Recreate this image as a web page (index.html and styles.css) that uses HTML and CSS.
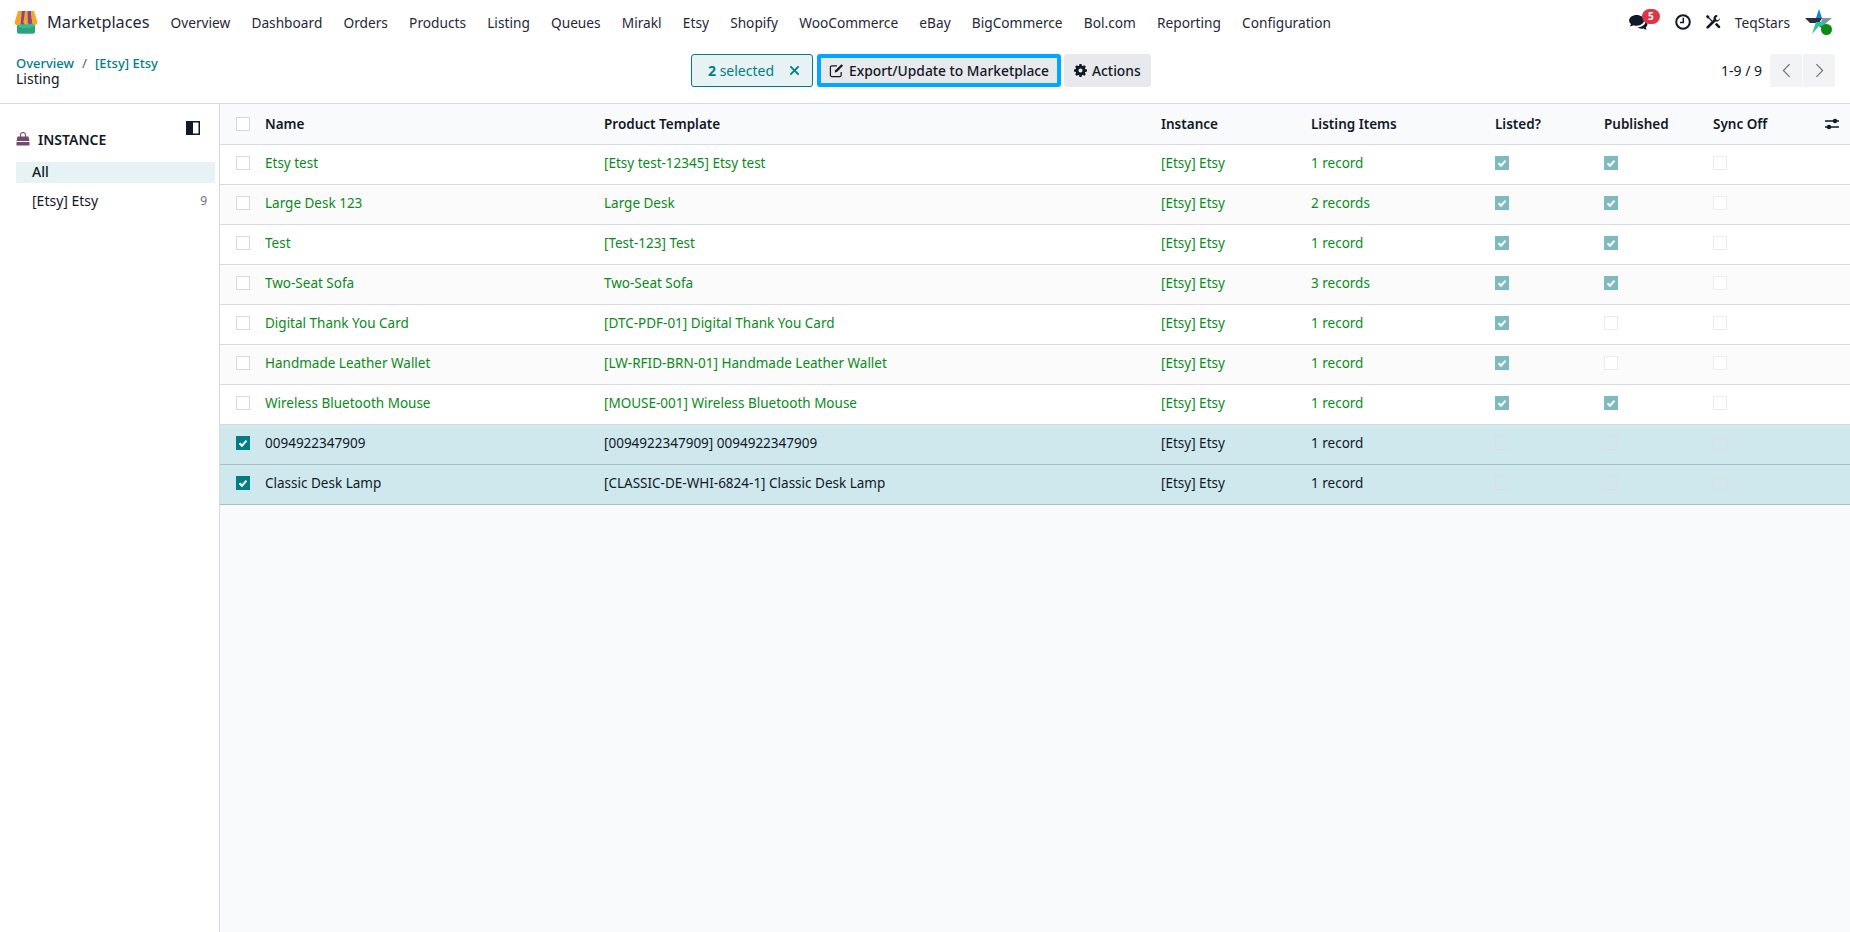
FILE: index.html
```html
<!DOCTYPE html>
<html lang="en">
<head>
  <meta charset="UTF-8" />
  <title>Marketplaces - Listing</title>
  <link rel="stylesheet" href="styles.css">
</head>
<body>
  <header class="navbar">
    <a class="brand">
      <svg class="brand-logo" viewBox="0 0 24 24" width="24" height="26">
        <path d="M3 12h18v9.500a2 2 0 0 1-2 2H5a2 2 0 0 1-2-2z" fill="#3cb892"/>
        <path d="M3 16c6 3 12 3 18 0v5.500a2 2 0 0 1-2 2H5a2 2 0 0 1-2-2z" fill="#2aa37f"/>
        <path d="M4 1h3.500L6.800 12.500a3.200 3.200 0 0 1-6.300.2z" fill="#f5a623"/>
        <path d="M7.500 1h3.600l-.2 11.500a2 2 0 0 1-4.100 0z" fill="#8e4585"/>
        <path d="M11 1h3.200l.6 11.500a2.800 2.800 0 0 1-5.400 0z" fill="#f5a623"/>
        <path d="M13.600 1h3.600l1 11.500a2.300 2.300 0 0 1-4.400 0z" fill="#8e4585"/>
        <path d="M17 1h3l3.500 11.700a2.700 2.700 0 0 1-5.300 0z" fill="#f5a623"/>
      </svg>
      <span>Marketplaces</span>
    </a>
    <nav class="menu">
      <a>Overview</a>
      <a>Dashboard</a>
      <a>Orders</a>
      <a>Products</a>
      <a>Listing</a>
      <a>Queues</a>
      <a>Mirakl</a>
      <a>Etsy</a>
      <a>Shopify</a>
      <a>WooCommerce</a>
      <a>eBay</a>
      <a>BigCommerce</a>
      <a>Bol.com</a>
      <a>Reporting</a>
      <a>Configuration</a>
    </nav>
    <div class="systray">
      <span class="tray-chat">
        <svg viewBox="0 0 20 16" width="19" height="15">
          <path d="M8 0C3.600 0 0 2.600 0 5.800c0 1.500.8 2.800 2 3.800-.3 1.100-1 2-1.500 2.500 1.500 0 3-.6 4-1.300 1 .4 2.200.6 3.500.6 4.400 0 8-2.500 8-5.700S12.400 0 8 0z" fill="#111827"/>
          <path d="M17.500 5.500c.1.300.1.600.1.900 0 3.900-4 6.600-8.600 6.700 1.100 1 2.700 1.500 4.400 1.500.7 0 1.400-.1 2-.3.8.6 2.100 1.200 3.600 1.200-.5-.5-1.100-1.300-1.300-2.200 1.100-.9 1.800-2.100 1.800-3.400 0-1.700-.8-3.200-2-4.400z" fill="#111827"/>
        </svg>
        <span class="tray-badge">5</span>
      </span>
      <svg class="tray-clock" viewBox="0 0 16 16" width="16" height="16">
        <circle cx="8" cy="8" r="6.800" fill="none" stroke="#111827" stroke-width="2"/>
        <path d="M8.300 3.800v4.700H5" fill="none" stroke="#111827" stroke-width="1.500"/>
      </svg>
      <svg class="tray-tools" viewBox="0 0 16 16" width="16" height="16">
        <path d="M2.200 1 1 2.200l1 2 1.600.4 3.200 3.200.9-.9-3.200-3.200-.4-1.600z" fill="#111827"/>
        <path d="M11.800 1a3.400 3.400 0 0 0-3.200 4.500L1.700 12.400a1.300 1.300 0 0 0 1.900 1.900l6.900-6.900A3.400 3.400 0 0 0 15 4.200l-2 2-1.800-.5-.5-1.800 2-2a3.400 3.400 0 0 0-.9-.9z" fill="#111827"/>
        <path d="m9.900 10.400 3.400 3.600a1.300 1.300 0 0 0 1.800-1.800l-3.500-3.500z" fill="#111827"/>
      </svg>
      <span class="tray-user">TeqStars</span>
      <span class="tray-avatar">
        <svg viewBox="0 0 28 28" width="28" height="28">
          <path d="M14 1l3 9h-6z" fill="#1d7fd6"/>
          <path d="M0 10h17l-3 5H5z" fill="#2b2d42"/>
          <path d="M17 10h10l-7 6-4-1z" fill="#8a8fa8"/>
          <path d="M11 14h9l2 5-8-1-7 8z" fill="#27c39a"/>
          <path d="M14 18l8 1 1 6z" fill="#1b2a49"/>
          <circle cx="21.500" cy="21.500" r="5.500" fill="#0c8a14"/>
        </svg>
      </span>
    </div>
  </header>

  <section class="control-panel">
    <div class="breadcrumbs">
      <div class="crumb-links"><a>Overview</a><span class="crumb-sep">/</span><a>[Etsy] Etsy</a></div>
      <div class="crumb-current">Listing</div>
    </div>
    <div class="actions">
      <div class="selected-box">
        <span><b>2</b> selected</span>
        <svg viewBox="0 0 12 12" width="11" height="11"><path d="M1.500 1.500l9 9M10.500 1.500l-9 9" stroke="#017e84" stroke-width="2" fill="none"/></svg>
      </div>
      <button class="btn btn-focus">
        <svg viewBox="0 0 16 16" width="15" height="15">
          <path d="M13 9.500V13a1.500 1.500 0 0 1-1.500 1.500H3A1.500 1.500 0 0 1 1.500 13V4.500A1.500 1.500 0 0 1 3 3h5.500" fill="none" stroke="#111827" stroke-width="1.300"/>
          <path d="M13.300 1.200l1.700 1.700L8.400 9.500l-2.400.7.700-2.400z" fill="#111827"/>
        </svg>
        Export/Update to Marketplace
      </button>
      <button class="btn">
        <svg viewBox="0 0 16 16" width="13" height="13">
          <path d="M6.700 0h2.600l.4 2.100 1.200.5 1.800-1.200 1.900 1.900-1.200 1.800.5 1.200 2.100.4v2.600l-2.100.4-.5 1.200 1.200 1.800-1.900 1.900-1.800-1.200-1.200.5-.4 2.100H6.700l-.4-2.100-1.200-.5-1.800 1.200-1.900-1.900 1.200-1.800-.5-1.200L0 9.300V6.700l2.100-.4.500-1.200-1.200-1.800 1.900-1.900 1.800 1.200 1.200-.5zM8 5.500a2.500 2.500 0 1 0 0 5 2.500 2.500 0 0 0 0-5z" fill="#111827" fill-rule="evenodd"/>
        </svg>
        Actions
      </button>
    </div>
    <div class="pager">
      <span class="pager-count">1-9 / 9</span>
      <div class="pager-buttons">
        <button><svg viewBox="0 0 10 16" width="9" height="15"><path d="M8.500 1 1.500 8l7 7" fill="none" stroke="#6b7280" stroke-width="1.300"/></svg></button>
        <button><svg viewBox="0 0 10 16" width="9" height="15"><path d="M1.500 1l7 7-7 7" fill="none" stroke="#6b7280" stroke-width="1.300"/></svg></button>
      </div>
    </div>
  </section>

  <main class="content">
    <aside class="sidebar">
      <div class="sidebar-head">
        <svg class="bag" viewBox="0 0 14 14" width="14" height="14">
          <path d="M4.500 5V3a2.500 2.500 0 0 1 5 0v2" fill="none" stroke="#714b67" stroke-width="1.100"/>
          <path d="M1.500 4.500h11l1 4.500H.5z" fill="#714b67"/>
          <path d="M.5 10h13v3.500H.5z" fill="#714b67"/>
        </svg>
        <span>INSTANCE</span>
        <svg class="panel-toggle" viewBox="0 0 14 14" width="14" height="14">
          <rect x=".75" y=".75" width="12.500" height="12.500" fill="#fff" stroke="#111827" stroke-width="1.500"/>
          <rect x="1" y="1" width="6" height="12" fill="#111827"/>
        </svg>
      </div>
      <ul class="filter-list">
        <li class="active">All</li>
        <li>[Etsy] Etsy<span class="filter-count">9</span></li>
      </ul>
    </aside>

    <div class="list-wrap">
      <table class="list">
        <colgroup>
          <col class="c-check"><col class="c-name"><col class="c-template"><col class="c-instance"><col class="c-items"><col class="c-listed"><col class="c-published"><col class="c-sync">
        </colgroup>
        <thead>
          <tr>
            <th class="check-cell"><span class="cb"></span></th>
            <th>Name</th>
            <th>Product Template</th>
            <th>Instance</th>
            <th>Listing Items</th>
            <th>Listed?</th>
            <th>Published</th>
            <th class="sync-head">Sync Off
              <svg class="col-options" viewBox="0 0 14 12" width="14" height="12">
                <path d="M0 3h14M0 9h14" stroke="#111827" stroke-width="1.600"/>
                <circle cx="10" cy="3" r="2.200" fill="#111827"/>
                <circle cx="4" cy="9" r="2.200" fill="#111827"/>
              </svg>
            </th>
          </tr>
        </thead>
        <tbody id="rows"></tbody>
      </table>
    </div>
  </main>

  <script>
    const listings = [
      ["Etsy test", "[Etsy test-12345] Etsy test", "1 record", true, true],
      ["Large Desk 123", "Large Desk", "2 records", true, true],
      ["Test", "[Test-123] Test", "1 record", true, true],
      ["Two-Seat Sofa", "Two-Seat Sofa", "3 records", true, true],
      ["Digital Thank You Card", "[DTC-PDF-01] Digital Thank You Card", "1 record", true, false],
      ["Handmade Leather Wallet", "[LW-RFID-BRN-01] Handmade Leather Wallet", "1 record", true, false],
      ["Wireless Bluetooth Mouse", "[MOUSE-001] Wireless Bluetooth Mouse", "1 record", true, true],
      ["0094922347909", "[0094922347909] 0094922347909", "1 record", false, false, true],
      ["Classic Desk Lamp", "[CLASSIC-DE-WHI-6824-1] Classic Desk Lamp", "1 record", false, false, true]
    ];

    const tick = '<svg viewBox="0 0 12 12"><path d="M2.500 6.300l2.500 2.400 4.500-5" fill="none" stroke="#fff" stroke-width="2"/></svg>';

    function box(on, cls) {
      return '<span class="cb ' + cls + (on ? ' on' : '') + '">' + (on ? tick : '') + '</span>';
    }

    document.getElementById("rows").innerHTML = listings.map(([name, tpl, items, listed, published, selected]) =>
      '<tr class="' + (selected ? 'selected' : '') + '">' +
      '<td class="check-cell">' + box(selected, '') + '</td>' +
      '<td>' + name + '</td><td>' + tpl + '</td><td>[Etsy] Etsy</td><td>' + items + '</td>' +
      '<td class="ro-cell">' + box(listed, 'ro') + '</td><td class="ro-cell">' + box(published, 'ro') + '</td><td class="ro-cell">' + box(false, 'ro') + '</td>' +
      '</tr>').join('');
  </script>
</body>
</html>
```

FILE: styles.css
```css
* {
  box-sizing: border-box;
  padding: 0;
  margin: 0;
}

html,
body {
  height: 100%;
}

body {
  display: flex;
  flex-direction: column;
  background-color: #fff;
  color: #111827;
  font-family: "Noto Sans", sans-serif;
  font-size: 14px;
  overflow: hidden;
}

/* top bar */
.navbar {
  display: flex;
  align-items: center;
  height: 46px;
  padding: 0 17px 2px 14px;
  color: #1f2937;
  font-size: 13.7px;
}

.brand {
  display: flex;
  align-items: center;
  gap: 9px;
  font-size: 16.3px;
}

.menu {
  display: flex;
  gap: 21.2px;
  margin-left: 21px;
}

.systray {
  display: flex;
  align-items: center;
  margin-left: auto;
}

.tray-chat {
  position: relative;
  display: flex;
  width: 46px;
}

.tray-badge {
  position: absolute;
  top: -6px;
  left: 13px;
  width: 18px;
  height: 15px;
  border-radius: 8px;
  background-color: #dc3545;
  color: #fff;
  font-size: 10px;
  font-weight: 700;
  line-height: 15px;
  text-align: center;
}

.tray-tools {
  margin-left: 14px;
}

.tray-user {
  margin-left: 14px;
}

.tray-avatar {
  display: flex;
  margin-left: 15px;
}

/* control panel */
.control-panel {
  display: flex;
  align-items: center;
  height: 58px;
  padding: 0 15px 8px 16px;
  border-bottom: 1px solid #d8dadd;
}

.breadcrumbs {
  width: 675px;
  font-size: 13px;
  line-height: 16px;
}

.crumb-links {
  font-weight: 500;
  color: #017e84;
}

.crumb-sep {
  margin: 0 8px;
  color: #6b7280;
}

.crumb-current {
  font-size: 14px;
  color: #111827;
}

.actions {
  display: flex;
  align-items: center;
  gap: 3px;
}

.selected-box {
  display: flex;
  align-items: center;
  justify-content: space-between;
  width: 122px;
  height: 33px;
  margin-right: 1px;
  padding: 0 12px 1px 16px;
  border: 1px solid #017e84;
  border-radius: 3px;
  background-color: #e6f2f3;
  color: #017e84;
}

.btn {
  display: flex;
  align-items: center;
  gap: 5px;
  height: 33px;
  padding: 0 10px 1px;
  border: none;
  border-radius: 3px;
  background-color: #e7e9ed;
  color: #111827;
  font: 500 13.8px "Noto Sans", sans-serif;
}

.btn-focus {
  border: 4px solid #00a6ff;
  padding: 0 8px 1px;
}

.pager {
  display: flex;
  align-items: center;
  gap: 8px;
  margin-left: auto;
}

.pager-buttons {
  display: flex;
  gap: 1px;
}

.pager-buttons button {
  display: flex;
  align-items: center;
  justify-content: center;
  width: 32px;
  height: 33px;
  border: none;
  background-color: #f1f3f5;
}

.pager-buttons button:first-child {
  border-radius: 3px 0 0 3px;
}

.pager-buttons button:last-child {
  border-radius: 0 3px 3px 0;
}

/* sidebar + list */
.content {
  display: flex;
  flex: 1;
  min-height: 0;
  background-color: #f9fafb;
}

.sidebar {
  width: 220px;
  flex-shrink: 0;
  padding: 0 4px 0 16px;
  border-right: 1px solid #d8dadd;
  background-color: #fff;
}

.sidebar-head {
  position: relative;
  display: flex;
  align-items: center;
  gap: 8px;
  height: 58px;
  padding-top: 12px;
  font-weight: 600;
}

.panel-toggle {
  position: absolute;
  top: 17px;
  right: 15px;
}

.filter-list {
  list-style: none;
}

.filter-list li {
  display: flex;
  justify-content: space-between;
  height: 21px;
  margin-bottom: 8px;
  padding: 0 8px 0 16px;
  line-height: 20px;
}

.filter-list .active {
  background-color: #e6f2f3;
  font-weight: 500;
}

.filter-count {
  color: #6b7280;
  font-size: 12px;
}

.list-wrap {
  flex: 1;
}

.list {
  width: 100%;
  table-layout: fixed;
  border-collapse: collapse;
  font-size: 13.5px;
}

.c-check { width: 37px; }
.c-name { width: 339px; }
.c-template { width: 557px; }
.c-instance { width: 150px; }
.c-items { width: 184px; }
.c-listed { width: 109px; }
.c-published { width: 109px; }

.list th,
.list td {
  height: 40px;
  padding: 0 8px;
  border-bottom: 1px solid #d8dadd;
  text-align: left;
  white-space: nowrap;
}

.list th {
  background-color: #f9fafb;
  font-weight: 600;
}

.list td {
  padding-bottom: 3px;
  color: #0b8a1c;
}

.list tbody tr {
  background-color: #fff;
}

.list tbody tr:nth-child(even) {
  background-color: #fbfbfb;
}

.list tbody tr.selected {
  background-color: #cfe8ed;
}

.list tr.selected td {
  border-bottom-color: #a6bfc5;
  color: #111827;
}

.list .check-cell {
  padding: 0 0 0 16px;
}

.list td.check-cell,
.list td.ro-cell {
  padding-bottom: 2px;
}

.sync-head {
  position: relative;
}

.col-options {
  position: absolute;
  top: 14px;
  right: 11px;
}

.cb {
  display: block;
  width: 14px;
  height: 14px;
  border: 1px solid #d8dadd;
  background-color: #fff;
}

.cb svg {
  display: block;
  width: 100%;
  height: 100%;
}

.cb.on {
  border-color: #017e84;
  background-color: #017e84;
}

.cb.ro {
  border-color: #ebecee;
}

.cb.ro.on {
  border-color: #7fbabe;
  background-color: #7fbabe;
}

.selected .cb.ro {
  border-color: #d9dfe3;
  background-color: transparent;
}
```
